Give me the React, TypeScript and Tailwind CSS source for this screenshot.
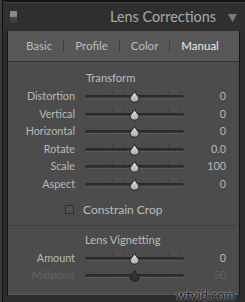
const font = { fontFamily: 'Lato, "Open Sans", sans-serif' }

type Row = { label: string; value: string; disabled?: boolean }

const transformRows: Row[] = [
  { label: 'Distortion', value: '0' },
  { label: 'Vertical', value: '0' },
  { label: 'Horizontal', value: '0' },
  { label: 'Rotate', value: '0.0' },
  { label: 'Scale', value: '100' },
  { label: 'Aspect', value: '0' },
]

const vignetteRows: Row[] = [
  { label: 'Amount', value: '0' },
  { label: 'Midpoint', value: '50', disabled: true },
]

const ticks = [0, 1, 2, 3, 4, 5, 6, 7, 8]

function Slider({ disabled }: { disabled?: boolean }) {
  return (
    <div className="relative w-[99px] h-full">
      {/* ticks */}
      {ticks.map((i) => (
        <div
          key={i}
          className="absolute top-[4px] w-px h-[3px] bg-[#3c3c3c]"
          style={{ left: 5 + i * 11.2 }}
        />
      ))}
      {/* track */}
      <div className="absolute left-0 right-0 top-[8px] h-[4px] rounded-full bg-[linear-gradient(to_bottom,#262626,#333_60%,#6b6b6b)]" />
      {/* thumb */}
      <svg className="absolute left-[44px] top-[4px]" width="11" height="12" viewBox="0 0 11 12">
        <defs>
          <linearGradient id={disabled ? 'thd' : 'th'} x1="0" y1="0" x2="0" y2="1">
            <stop offset="0" stopColor={disabled ? '#3a3a3a' : '#e2e2e2'} />
            <stop offset="1" stopColor={disabled ? '#2e2e2e' : '#a9a9a9'} />
          </linearGradient>
        </defs>
        <path
          d="M5.5 0.8 L9.8 6.6 Q10.4 10.9 5.5 11.2 Q0.6 10.9 1.2 6.6 Z"
          fill={`url(#${disabled ? 'thd' : 'th'})`}
          stroke="#1e1e1e"
          strokeWidth="1"
        />
      </svg>
    </div>
  )
}

function SliderRow({ row }: { row: Row }) {
  const text = row.disabled ? 'text-[#626262]' : 'text-[#b9b9b9]'
  return (
    <div className="flex items-start h-[17.6px]">
      <div className={`w-[67px] text-right text-[10.8px] leading-[18px] ${text}`}>{row.label}</div>
      <div className="ml-[10px] h-full">
        <Slider disabled={row.disabled} />
      </div>
      <div className={`w-[42px] text-right text-[10.8px] leading-[18px] ${text}`}>{row.value}</div>
    </div>
  )
}

export default function App() {
  return (
    <div
      className="relative w-[245px] h-[302px] overflow-hidden bg-[#2c2c2c] border-l-2 border-[#3b3b3b]"
      style={font}
    >
      <div className="h-full border-l border-[#111] border-t-2 border-t-[#151515]">
        <div className="h-px bg-[#444]" />
        {/* Header */}
        <div className="relative h-[28px] flex items-center pl-[7px] pr-[8px] bg-[#2f2f2f]">
          <div className="w-[7px] h-[12px] bg-[linear-gradient(to_bottom,#8a8a8a_0%,#8a8a8a_45%,#4a4a4a_50%,#3a3a3a_100%)] rounded-[1px]" />
          <div className="flex-1 text-right text-[14.4px] text-[#a9a9a9] pr-[12px]">
            Lens Corrections
          </div>
          <svg width="9" height="8" viewBox="0 0 9 8" className="mt-[1px]">
            <path d="M0 0 H9 L4.5 8 Z" fill="#7a7a7a" />
          </svg>
        </div>

        {/* Panel */}
        <div className="ml-[4px] mr-[5px] h-[264px] border-x border-[#141414] flex flex-col">
          {/* Tabs */}
          <div className="h-[30px] bg-[#575757] flex items-center pl-[18px] text-[11.5px] text-[#bdbdbd]">
            <span>Basic</span>
            <span className="mx-[11px] w-px h-[11px] bg-[#3f3f3f]" />
            <span>Profile</span>
            <span className="mx-[11px] w-px h-[11px] bg-[#3f3f3f]" />
            <span>Color</span>
            <span className="mx-[11px] w-px h-[11px] bg-[#3f3f3f]" />
            <span className="text-[#ececec]">Manual</span>
          </div>
          <div className="h-px bg-[#333]" />
          {/* Body */}
          <div className="flex-1 bg-[#4c4c4c] flex flex-col">
            <div className="mt-[8px] h-[16px] pl-[78px] text-[11.2px] leading-[16px] text-[#bcbcbc]">
              Transform
            </div>
            <div className="mt-[1px]">
              {transformRows.map((r) => (
                <SliderRow key={r.label} row={r} />
              ))}
            </div>
            <div className="mt-[7px] h-[20px] flex items-center pl-[57px]">
              <div className="w-[9px] h-[9px] border border-[#2e2e2e] bg-[#505050]" />
              <span className="ml-[9px] text-[12px] text-[#bcbcbc]">Constrain Crop</span>
            </div>
            <div className="mt-[5px] h-px bg-[#414141]" />
            <div className="mt-[6px] h-[16px] pl-[77px] text-[11.2px] leading-[16px] text-[#bcbcbc]">
              Lens Vignetting
            </div>
            <div className="mt-[1px]">
              {vignetteRows.map((r) => (
                <SliderRow key={r.label} row={r} />
              ))}
            </div>
          </div>
          <div className="h-px bg-[#5a5a5a]" />
        </div>
      </div>
      <div className="absolute left-[174px] top-[286px] text-[13px] text-[#111] [text-shadow:0_0_2px_#fff]">
        wtvid.com
      </div>
    </div>
  )
}
